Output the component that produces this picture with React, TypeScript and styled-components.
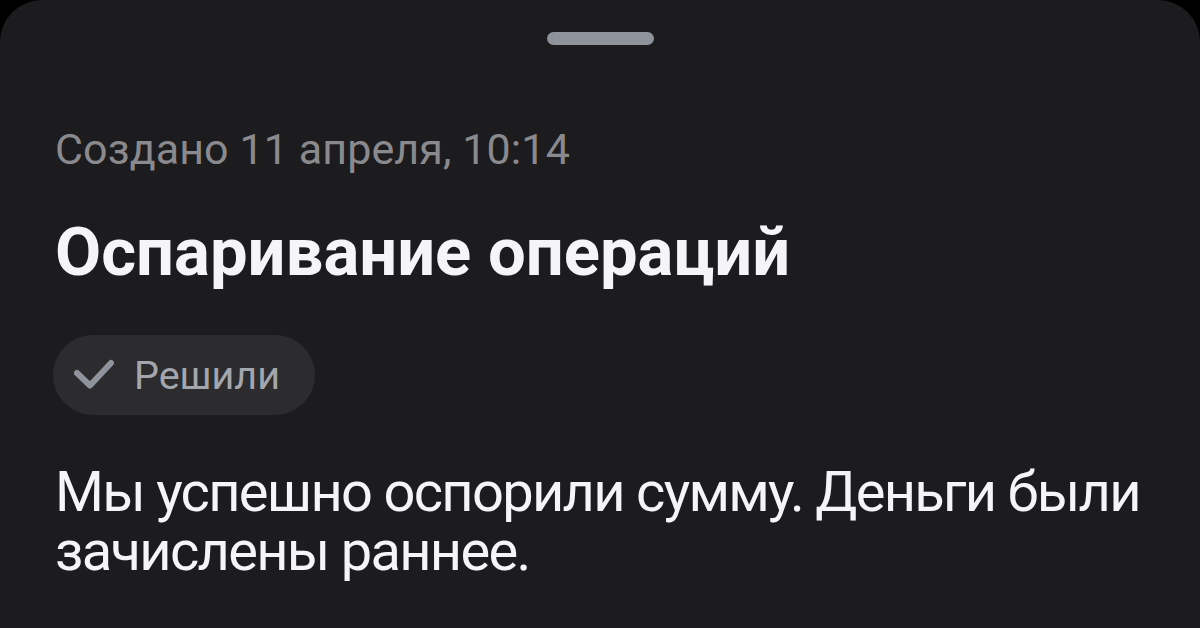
import styled, { createGlobalStyle } from "styled-components";

const GlobalStyle = createGlobalStyle`
  html, body {
    margin: 0;
    padding: 0;
    background: #000;
  }
  body {
    font-family: Roboto, "Noto Sans", sans-serif;
  }
`;

const Sheet = styled.div`
  width: 1200px;
  height: 628px;
  box-sizing: border-box;
  background: #1c1c1e;
  border-radius: 42px 42px 0 0;
  overflow: hidden;
  display: flex;
  flex-direction: column;
`;

const HandleRow = styled.div`
  display: flex;
  justify-content: center;
  padding-top: 32px;
`;

const Handle = styled.div`
  width: 107px;
  height: 13px;
  border-radius: 7px;
  background: #8f939c;
`;

const Content = styled.div`
  padding: 0 55px;
  display: flex;
  flex-direction: column;
  align-items: flex-start;
`;

const CreatedAt = styled.div`
  margin-top: 79px;
  font-size: 43px;
  line-height: 50px;
  letter-spacing: 0.1px;
  color: #8a8a8e;
`;

const Title = styled.h1`
  margin: 39px 0 0;
  font-size: 67px;
  line-height: 78px;
  font-weight: 700;
  color: #f5f5f7;
`;

const Chip = styled.div`
  margin-top: 44px;
  margin-left: -2px;
  height: 80px;
  padding: 0 35px 0 21px;
  border-radius: 40px;
  background: #2c2c2e;
  display: flex;
  align-items: center;
  gap: 20px;
  color: #a3a6ad;
  font-size: 39.5px;
`;

const Body = styled.p`
  margin: 48px 0 0;
  font-size: 56px;
  line-height: 59px;
  letter-spacing: -1.7px;
  color: #f5f5f7;
`;

const Line = styled.span`
  display: block;
  white-space: nowrap;
`;

function Check() {
  return (
    <svg width="40" height="40" viewBox="0 0 40 40" fill="none">
      <path
        d="M3 18l13 12.5L37 8"
        stroke="#8f939c"
        strokeWidth="6"
        strokeLinecap="round"
        strokeLinejoin="round"
      />
    </svg>
  );
}

export default function App() {
  return (
    <>
      <GlobalStyle />
      <Sheet>
        <HandleRow>
          <Handle />
        </HandleRow>
        <Content>
          <CreatedAt>Создано 11 апреля, 10:14</CreatedAt>
          <Title>Оспаривание операций</Title>
          <Chip>
            <Check />
            Решили
          </Chip>
          <Body>
            <Line>Мы успешно оспорили сумму. Деньги были</Line>
            <Line>зачислены раннее.</Line>
          </Body>
        </Content>
      </Sheet>
    </>
  );
}
